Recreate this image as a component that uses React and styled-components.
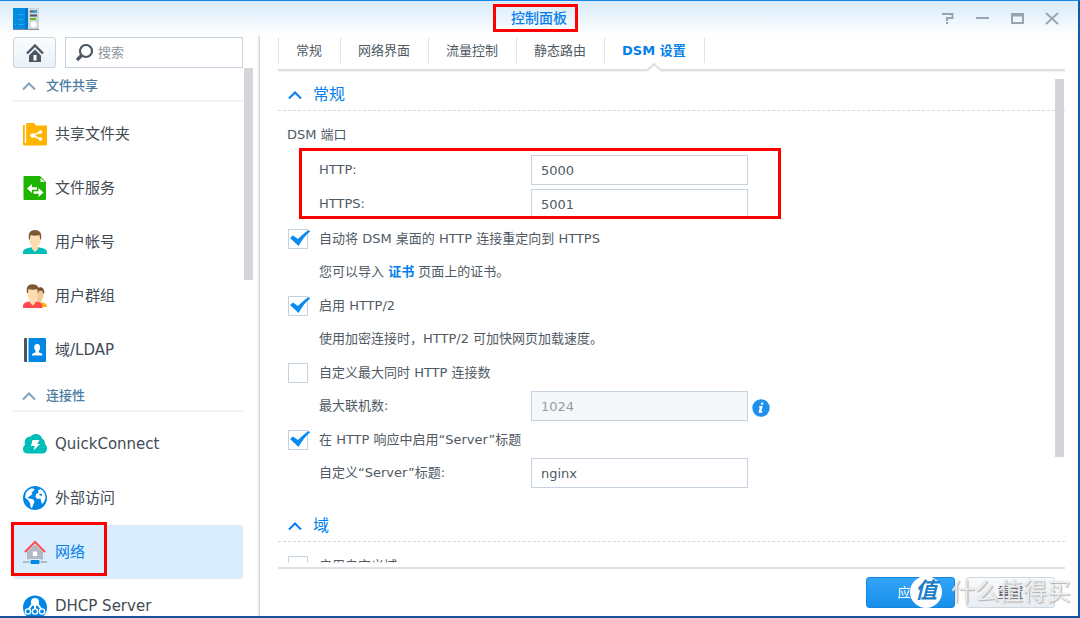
import React, { useState } from 'react'
import styled, { createGlobalStyle, css } from 'styled-components'

const colors = {
  primary: '#057feb',
  text: '#505a64',
  nav: '#414b55',
  group: '#4a7ba3',
  border: '#c6d2de',
  thumb: '#d3d5d8',
  mark: '#fe0000'
}

const GlobalStyle = createGlobalStyle`
  * {
    box-sizing: border-box;
  }
  body {
    margin: 0;
    overflow: hidden;
    color: ${colors.text};
    font: 13px/20px 'DejaVu Sans', 'Noto Sans CJK SC', sans-serif;
  }
  button, input {
    font: inherit;
    color: inherit;
  }
`

const StWindow = styled.div`
  display: flex;
  flex-direction: column;
  position: relative;
  height: 100vh;
  overflow: hidden;
  background: #fff;
  border-top: 1px solid #1a8ae6;
  border-right: 2px solid #0f5ca6;
  border-bottom: 2px solid #1653a0;
`
const StTitleBar = styled.header`
  display: grid;
  grid-template-columns: 1fr auto 1fr;
  align-items: center;
  height: 35px;
  flex: none;
  padding: 0 18px 0 12px;
  background: linear-gradient(#d8ebfa, #fff);
`
const StTitle = styled.h1`
  position: relative;
  margin: 0 0 2px 6px;
  color: ${colors.primary};
  font-size: 14px;
  line-height: 20px;
  font-weight: 500;
`
const StWindowTools = styled.div`
  display: flex;
  justify-content: flex-end;
  gap: 19px;
  margin-bottom: 2px;
`
const StTool = styled.button`
  display: flex;
  width: 16px;
  height: 16px;
  padding: 0;
  border: 0;
  background: none;
  color: #98a4af;
`
/* red frame drawn around a part of the window */
const StMark = styled.span`
  position: absolute;
  top: ${p => p.$top}px;
  left: ${p => p.$left}px;
  width: ${p => p.$width}px;
  height: ${p => p.$height}px;
  border: 3px solid ${colors.mark};
  pointer-events: none;
`
const StBody = styled.div`
  display: flex;
  flex: 1;
  min-height: 0;
`

const StSidebar = styled.aside`
  display: flex;
  flex-direction: column;
  width: 260px;
  flex: none;
  padding-top: 1px;
  border-right: 1px solid #d5d8db;
  box-shadow: inset -2px 0 2px -1px #e6e8ea;
`
const StSearchRow = styled.div`
  display: flex;
  gap: 9px;
  padding: 0 16px 0 13px;
`
const StHome = styled.button`
  display: flex;
  align-items: center;
  justify-content: center;
  width: 43px;
  height: 31px;
  padding: 0;
  border: 1px solid #c9d5e1;
  border-radius: 3px;
  background: linear-gradient(#fafcfe, #eaf1f7);
`
const StSearch = styled.label`
  display: flex;
  align-items: center;
  gap: 5px;
  flex: 1;
  height: 31px;
  padding-left: 9px;
  border: 1px solid ${colors.border};

  svg {
    flex: none;
  }
  input {
    width: 100%;
    min-width: 0;
    padding: 0;
    border: 0;
    outline: 0;
    background: none;
  }
  input::placeholder {
    color: #8c959e;
    opacity: 1;
  }
`
const StNavScroll = styled.nav`
  position: relative;
  flex: 1;
  min-height: 0;
  overflow: hidden;
  padding: 0 16px 0 13px;
`
const StThumb = styled.span`
  position: absolute;
  top: ${p => p.$top}px;
  right: ${p => p.$right}px;
  width: 9px;
  height: ${p => p.$height}px;
  background: ${colors.thumb};
`
const StGroupTitle = styled.button`
  display: flex;
  align-items: center;
  gap: 10px;
  width: 100%;
  height: 34px;
  padding: 4px 9px 0;
  border: 0;
  border-bottom: 2px solid #f0f3f6;
  background: none;
  color: ${colors.group};
  font-weight: 500;

  svg {
    color: #7fa3bd;
  }
`
const StNavList = styled.ul`
  margin: 0;
  padding: 5px 0 1px;
  list-style: none;
`
const StNavItem = styled.li`
  position: relative;
`
const StNavLink = styled.a`
  display: flex;
  align-items: center;
  gap: 8px;
  height: 54px;
  padding-left: 10px;
  border-radius: 3px;
  color: ${colors.nav};
  font-size: 15px;
  text-decoration: none;
  ${p => p.$active && css`
    background: #d9edfe;
    color: ${colors.primary};
  `}

  svg {
    flex: none;
  }
`

const StMain = styled.main`
  display: flex;
  flex-direction: column;
  flex: 1;
  min-width: 0;
  padding: 1px 13px 0 18px;
`
const StTabs = styled.div`
  display: flex;
  height: 34px;
  flex: none;
  border-bottom: 2px solid #dfe0e1;
  box-shadow: 0 1px 1px #f1f1f1;
`
const StTab = styled.button`
  position: relative;
  height: 26px;
  padding: 2px 18px 0 17px;
  border: 0;
  border-left: 1px solid #dbe5ee;
  background: none;
  white-space: nowrap;

  &:last-child {
    border-right: 1px solid #dbe5ee;
  }
  ${p => p.$active && css`
    color: ${colors.primary};
    font-weight: bold;
  `}
`
const StNotch = styled.svg`
  position: absolute;
  left: calc(50% - 8px);
  top: 26px;
`
const StScroll = styled.div`
  position: relative;
  flex: 1;
  min-height: 0;
  overflow: hidden;
  padding-top: 8px;
`
const StSection = styled.section`
  margin-bottom: 20px;
`
const StSectionTitle = styled.h2`
  display: flex;
  align-items: center;
  gap: 11px;
  height: 32px;
  margin: 0;
  padding-left: 10px;
  border-bottom: 1px dashed #ccdcea;
  color: ${colors.primary};
  font-size: 16px;
  font-weight: 400;
`
const StSectionBody = styled.div`
  padding: 7px 9px 0;
`
const StPorts = styled.div`
  position: relative;
  margin: 1px 0;
`
const StLine = styled.div`
  display: flex;
  align-items: center;
  height: 34px;
  padding-left: ${p => (p.$indent ? 32 : 0)}px;

  a {
    color: ${colors.primary};
    font-weight: bold;
    text-decoration: none;
  }
`
const StLabel = styled.label`
  width: 212px;
`
const StInput = styled.input`
  width: 217px;
  height: 30px;
  padding: 0 9px;
  border: 1px solid ${colors.border};
  background: #fff;
  outline: 0;

  &:disabled {
    background: #f5f7fa;
    color: #969da5;
  }
`
const StInfo = styled.button`
  display: flex;
  margin: 3px 0 0 4px;
  padding: 0;
  border: 0;
  background: none;
`
const StCheckRow = styled.label`
  display: flex;
  position: relative;
  align-items: center;
  gap: 11px;
  height: 33px;

  input {
    appearance: none;
    width: 20px;
    height: 20px;
    margin: 0 0 0 1px;
    border: 1px solid ${colors.border};
    background: #fff;
  }
  svg {
    position: absolute;
    left: 3px;
    top: 7px;
    display: none;
    pointer-events: none;
  }
  input:checked + svg {
    display: block;
  }
`
const StFooter = styled.footer`
  display: flex;
  position: relative;
  justify-content: flex-end;
  gap: 11px;
  height: 53px;
  flex: none;
  padding: 14px 10px 0 0;

  &::before {
    content: '';
    position: absolute;
    top: -1px;
    left: 0;
    right: 0;
    height: 5px;
    border-bottom: 2px solid #dfe0e1;
    background: linear-gradient(#fff8, #fff);
  }
`
const StButton = styled.button`
  width: 89px;
  height: 31px;
  border: 1px solid ${p => (p.$primary ? '#1687e0' : '#cdd6df')};
  border-radius: 3px;
  background: ${p => (p.$primary ? 'linear-gradient(#33a4fa, #178fe8)' : 'linear-gradient(#f8fafc, #e8edf2)')};
  color: ${p => (p.$primary ? '#fff' : colors.nav)};
`
const StWatermark = styled.div`
  display: flex;
  position: absolute;
  right: 7px;
  bottom: 8px;
  align-items: center;
  gap: 9px;
  color: #fffc;
  font-size: 24px;
  line-height: 32px;
  text-shadow: 1px 1px 1px #8889, 0 0 1px #aaac;
  pointer-events: none;
  white-space: nowrap;
`
const StBadge = styled.span`
  width: 32px;
  height: 32px;
  border-radius: 50%;
  background: #fff;
  color: #1f7fc4;
  font-size: 22px;
  font-style: italic;
  font-weight: bold;
  line-height: 30px;
  text-align: center;
  text-shadow: none;
`

const Icon = ({ size = 24, children }) => (
  <svg width={size} height={size} viewBox='0 0 24 24' fill='none' aria-hidden='true'>
    {children}
  </svg>
)

const Chevron = () => (
  <svg width='14' height='10' viewBox='0 0 14 10' fill='none' aria-hidden='true'>
    <path d='M1 8.500 7 2.500l6 6' stroke='currentColor' strokeWidth='2' />
  </svg>
)

const icons = {
  folder: (
    <Icon>
      <path d='M0 3h1.800v18H3v2.500H1.500A1.500 1.500 0 0 1 0 22z' fill='#ffb400' />
      <path d='M3.200 2c0-.7.8-1 1.300-1H11l2 2.500h10c.7 0 1 .5 1 1V22c0 .8-.5 1.500-1.300 1.500H2v-2h1.200z' fill='#ffb400' />
      <path d='m17.500 10-8 3.500 8 3.500' stroke='#fff' strokeWidth='1.800' />
      <circle cx='17.500' cy='10' r='1.800' fill='#fff' />
      <circle cx='9.500' cy='13.500' r='2.300' fill='#fff' />
      <circle cx='17.500' cy='17' r='1.800' fill='#fff' />
    </Icon>
  ),
  file: (
    <Icon>
      <path d='M1.500 0H17l6 6v17a1 1 0 0 1-1 1H1.500a1 1 0 0 1-1-1V1a1 1 0 0 1 1-1z' fill='#1fb400' />
      <path d='M17.500 2v4H22z' fill='#fff' />
      <path d='M4 12.500 9 8v3.200h5v2.600H9V17zM20.500 16.500 15.500 12v3.200h-5v2.600h5V21z' fill='#fff' />
    </Icon>
  ),
  user: (
    <Icon>
      <path d='M0 24v-2c0-2 2-3.300 5-4l3.500-.8 3.500 4 3.500-4L19 18c3 .7 5 2 5 4v2z' fill='#00bdb8' />
      <path d='M6.500 5h11v5c0 3-1 5-2.500 6.500v2.500L12 22l-3-3v-2.500C7.500 15 6.500 13 6.500 10z' fill='#fddcb2' />
      <path d='M6 9.500C5 3.500 6.800 0 12 0s7 3.500 6 9.500h-.8L16.500 5C13.500 6 10.500 6 7.600 5L6.800 9.500z' fill='#7d5632' />
    </Icon>
  ),
  users: (
    <Icon>
      <path d='M15 5h5.500v6c0 2.500-1 4-2 5v2l-2 4-3-3z' fill='#f4c894' />
      <path d='M14.500 4c3-1.800 7-1 6.800 5.500h-1L19 6.500l-3 .5z' fill='#74502f' />
      <path d='M18 18.200l2 .3c3 1 4 2.500 4 4.500h-4z' fill='#ffb400' />
      <path d='M0 24v-2c0-2 1.500-3.500 4-4l2.500-.7 3 3.700 3-3.700 3 .7c2.500.5 4 2 4 4v2z' fill='#ff4b4e' />
      <path d='M4.500 5h10.500v5c0 3-1 5-2.500 6.300v2.500L9.700 21.500 7 18.800v-2.500C5.500 15 4.500 13 4.500 10z' fill='#fddcb2' />
      <path d='M4 9C3 3 5 .3 9.700.3S16.400 3 15.500 9h-.8L14 5C11 6 8.500 6 5.600 5L4.800 9z' fill='#7d5632' />
    </Icon>
  ),
  ldap: (
    <Icon>
      <path d='M2 0h2v24H2a1 1 0 0 1-1-1V1a1 1 0 0 1 1-1z' fill='#4a555f' />
      <path d='M5.500 0H22a1 1 0 0 1 1 1v22a1 1 0 0 1-1 1H5.500z' fill='#0086e5' />
      <path d='M14.200 6c2 0 3.200 1.300 3 3.300-.1 1.700-.6 3-1.400 3.700v1.300l3 1.300c.5.300.7.900.7 1.900H8.900c0-1 .2-1.600.7-1.900l3-1.300V13c-.8-.7-1.300-2-1.400-3.700-.2-2 1-3.300 3-3.300z' fill='#fff' />
    </Icon>
  ),
  cloud: (
    <Icon>
      <path d='M4.500 21.500A4.600 4.600 0 0 1 0 17c0-2 .8-3.300 2-4C1 8.500 3 4.500 7.500 4.500 9 2.500 11 1.700 13.500 2c3 .3 5 2 5.500 4.500 2.300 1 3.300 3 2.800 5.500C23.500 13 24 14.500 24 16.500c0 3-2 5-5 5z' fill='#00bdb8' />
      <path d='M9.500 8h7l-2.300 4H17l-6.500 6.500 1.200-4.500H8z' fill='#fff' />
    </Icon>
  ),
  globe: (
    <Icon>
      <circle cx='12' cy='12' r='12' fill='#0086e5' />
      <path d='M3 6.500 6 3.500l3-1.300 2.500.8-1 2-2 1.500L9.500 8 7 10l-2.500 1.500 1.500 1 4 .8 1.500 2.200-1 2.500L9 22l-1.500-.7L7 17l-2-3-3-2.500z' fill='#fff' />
      <path d='m15 4.500 2.500-1.500L20 5l2 3 .5 4-1.500 4-2 2-1-3-.5-2.500-3 .5-2-2L13 8l2.500-1z' fill='#fff' />
      <path d='m17 7.500 2.500 1-1 1.500-2.500-1z' fill='#0086e5' />
    </Icon>
  ),
  network: (
    <Icon>
      <path d='M12 4.500 4 12v7.500h16V12z' fill='#b1b9c3' />
      <path d='M2 12 12 2l10 10' stroke='#ff4b4e' strokeWidth='2' />
      <path d='M9.800 11.500h4.400v4.500H9.800z' fill='#fff' />
      <path d='M0 21h24v2H0z' fill='#b1b9c3' />
      <rect x='6.500' y='19' width='11' height='5' fill='#d9edfe' />
      <rect x='7.500' y='20' width='9' height='4' rx='1' fill='#0086e5' />
    </Icon>
  ),
  dhcp: (
    <Icon>
      <circle cx='12' cy='13.500' r='12' fill='#0086e5' />
      <path d='m9.500 10-4 5.500M14.500 10l4 5.500M12 10v5.500' stroke='#fff' strokeWidth='2' />
      <circle cx='12' cy='8' r='4' fill='#fff' />
      <g stroke='#fff' strokeWidth='1.400' fill='#0086e5'>
        <circle cx='5' cy='17.500' r='2.600' />
        <circle cx='12' cy='17.500' r='2.600' />
        <circle cx='19' cy='17.500' r='2.600' />
      </g>
    </Icon>
  )
}

const AppLogo = () => (
  <svg width='27' height='24' viewBox='0 0 27 24' aria-hidden='true'>
    <path d='M1 22h26v1H1z' fill='#7f8b94' />
    <path d='M16 1h11v21H16z' fill='#cfd6dc' />
    <path d='M1 1h15v21H1z' fill='#078be0' />
    <path d='M13 1h3v21h-3z' fill='#0079cb' />
    <path d='M3 7.500h1M6 7.500h6M3 12.500h1M6 12.500h6M3 17.500h1M6 17.500h6' stroke='#18a9f2' />
    <path d='M18 4.500h7M18 8.500h7' stroke='#4b5862' strokeWidth='2' />
    <path d='M21 4.500h4' stroke='#25a8ed' strokeWidth='2' />
    <path d='M18 12h6' stroke='#61bd21' strokeWidth='2' />
    <circle cx='21.500' cy='17.500' r='3' fill='#fff' />
  </svg>
)

const navGroups = [
  {
    title: '文件共享',
    items: [
      { icon: 'folder', name: '共享文件夹' },
      { icon: 'file', name: '文件服务' },
      { icon: 'user', name: '用户帐号' },
      { icon: 'users', name: '用户群组' },
      { icon: 'ldap', name: '域/LDAP' }
    ]
  },
  {
    title: '连接性',
    items: [
      { icon: 'cloud', name: 'QuickConnect' },
      { icon: 'globe', name: '外部访问' },
      { icon: 'network', name: '网络', active: true },
      { icon: 'dhcp', name: 'DHCP Server' }
    ]
  }
]

const tabs = ['常规', '网络界面', '流量控制', '静态路由', 'DSM 设置']

const TitleBar = () => (
  <StTitleBar>
    <AppLogo />
    <StTitle>
      控制面板
      <StMark $top={-4} $left={-18} $width={85} $height={28} />
    </StTitle>
    <StWindowTools>
      <StTool aria-label='帮助'>
        <svg width='16' height='16' fill='none' stroke='currentColor' strokeWidth='2'>
          <path d='M3 4h10.500v4H8v3M8 12v2' />
        </svg>
      </StTool>
      <StTool aria-label='最小化'>
        <svg width='16' height='16' stroke='currentColor' strokeWidth='2'>
          <path d='M2 8h13' />
        </svg>
      </StTool>
      <StTool aria-label='最大化'>
        <svg width='16' height='16' fill='none' stroke='currentColor' strokeWidth='2'>
          <path d='M3 4h11v9H3zM3 5.500h11' />
        </svg>
      </StTool>
      <StTool aria-label='关闭'>
        <svg width='16' height='16' stroke='currentColor' strokeWidth='2'>
          <path d='m2 3 12 11M14 3 2 14' />
        </svg>
      </StTool>
    </StWindowTools>
  </StTitleBar>
)

const Sidebar = () => (
  <StSidebar>
    <StSearchRow>
      <StHome aria-label='主页'>
        <svg width='18' height='18' viewBox='0 0 18 18' fill='none'>
          <path d='m1 9.500 8-8 8 8' stroke='#4b5763' strokeWidth='2.400' />
          <path d='M3 11.500 9 5.500l6 6V18H3z' fill='#4b5763' />
          <path d='M7.500 11h3v5.500h-3z' fill='#fff' />
        </svg>
      </StHome>
      <StSearch>
        <svg width='18' height='18' viewBox='0 0 18 18' fill='none' stroke='#4b5763'>
          <circle cx='11' cy='7' r='6' strokeWidth='2.200' />
          <path d='m6.500 11.500-4.500 4.500' strokeWidth='3.200' />
        </svg>
        <input type='text' placeholder='搜索' aria-label='搜索' />
      </StSearch>
    </StSearchRow>
    <StNavScroll>
      {navGroups.map(group => (
        <div key={group.title}>
          <StGroupTitle>
            <Chevron />
            {group.title}
          </StGroupTitle>
          <StNavList>
            {group.items.map(item => (
              <StNavItem key={item.name}>
                <StNavLink href='#' $active={item.active}>
                  {icons[item.icon]}
                  {item.name}
                </StNavLink>
                {item.active && <StMark $top={-3} $left={-2} $width={96} $height={54} />}
              </StNavItem>
            ))}
          </StNavList>
        </div>
      ))}
      <StThumb $top={0} $right={6} $height={212} />
    </StNavScroll>
  </StSidebar>
)

const Check = ({ defaultChecked, children }) => (
  <StCheckRow>
    <input type='checkbox' defaultChecked={defaultChecked} />
    <svg width='22' height='18' viewBox='0 0 22 18' aria-hidden='true'>
      <path d='M0 9 3 6.500l5 3.500C11 7 15 3 19 1l1 1.500C15.500 6 12 11 8.500 17z' fill='#0a8bf2' />
    </svg>
    <span>{children}</span>
  </StCheckRow>
)

const Field = ({ id, label, info, ...rest }) => (
  <StLine $indent>
    <StLabel htmlFor={id}>{label}</StLabel>
    <StInput id={id} type='text' {...rest} />
    {info && (
      <StInfo aria-label='信息'>
        <svg width='18' height='18' viewBox='0 0 18 18'>
          <circle cx='9' cy='9' r='8.700' fill='#1d90ee' />
          <path d='M9.300 3.500h2.200l-.5 2.200H8.800zM7.300 7h3.400l-1.300 5.300h1.100l-.4 1.500H6.500l1.300-5.300h-.9z' fill='#fff' />
        </svg>
      </StInfo>
    )}
  </StLine>
)

const Section = ({ title, children }) => (
  <StSection>
    <StSectionTitle>
      <Chevron />
      {title}
    </StSectionTitle>
    <StSectionBody>{children}</StSectionBody>
  </StSection>
)

const App = () => {
  const [tab, setTab] = useState('DSM 设置')

  return (
    <StWindow>
      <GlobalStyle />
      <TitleBar />
      <StBody>
        <Sidebar />
        <StMain>
          <StTabs role='tablist'>
            {tabs.map(name => (
              <StTab
                key={name}
                role='tab'
                aria-selected={tab === name}
                $active={tab === name}
                onClick={() => setTab(name)}
              >
                {name}
                {tab === name && (
                  <StNotch width='16' height='9' viewBox='0 0 16 9'>
                    <path d='M0 9 8 1l8 8z' fill='#fff' />
                    <path d='M0 7h1.500L8 1l6.500 6H16' fill='none' stroke='#dfe0e1' strokeWidth='2' />
                  </StNotch>
                )}
              </StTab>
            ))}
          </StTabs>
          <StScroll>
            <StThumb $top={8} $right={1} $height={378} />
            <Section title='常规'>
              <StLine>DSM 端口</StLine>
              <StPorts>
                <Field id='http' label='HTTP:' defaultValue='5000' />
                <Field id='https' label='HTTPS:' defaultValue='5001' />
                <StMark $top={-5} $left={12} $width={482} $height={71} />
              </StPorts>
              <Check defaultChecked>自动将 DSM 桌面的 HTTP 连接重定向到 HTTPS</Check>
              <StLine $indent>
                <span>
                  您可以导入 <a href='#'>证书</a> 页面上的证书。
                </span>
              </StLine>
              <Check defaultChecked>启用 HTTP/2</Check>
              <StLine $indent>使用加密连接时，HTTP/2 可加快网页加载速度。</StLine>
              <Check>自定义最大同时 HTTP 连接数</Check>
              <Field id='max' label='最大联机数:' defaultValue='1024' disabled info />
              <Check defaultChecked>在 HTTP 响应中启用“Server”标题</Check>
              <Field id='server' label='自定义“Server”标题:' defaultValue='nginx' />
            </Section>
            <Section title='域'>
              <Check>启用自定义域</Check>
            </Section>
          </StScroll>
          <StFooter>
            <StButton $primary>应用</StButton>
            <StButton>重置</StButton>
          </StFooter>
        </StMain>
      </StBody>
      <StWatermark>
        <StBadge>值</StBadge>
        什么值得买
      </StWatermark>
    </StWindow>
  )
}

export default App
